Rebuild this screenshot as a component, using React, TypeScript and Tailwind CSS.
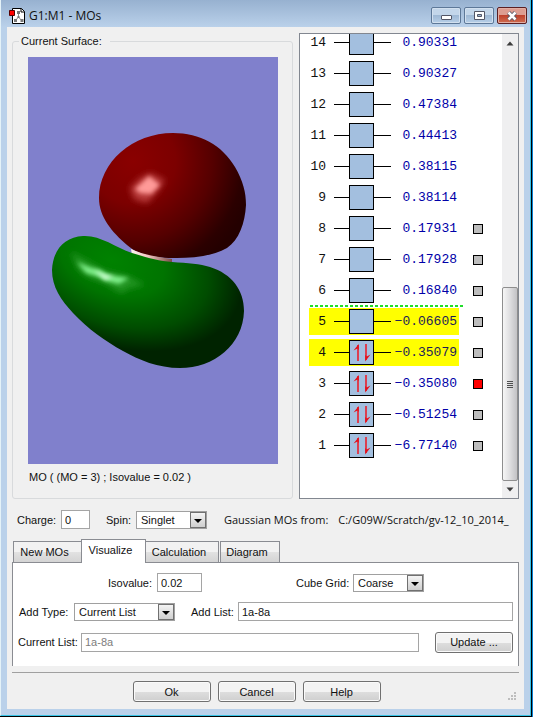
import type { ReactNode } from "react";

const ORBITALS = [
  { id: 14, energy: "0.90331" },
  { id: 13, energy: "0.90327" },
  { id: 12, energy: "0.47384" },
  { id: 11, energy: "0.44413" },
  { id: 10, energy: "0.38115" },
  { id: 9, energy: "0.38114" },
  { id: 8, energy: "0.17931", pickable: true },
  { id: 7, energy: "0.17928", pickable: true },
  { id: 6, energy: "0.16840", pickable: true },
  { id: 5, energy: "−0.06605", pickable: true, highlighted: true },
  { id: 4, energy: "−0.35079", pickable: true, highlighted: true, filled: true },
  { id: 3, energy: "−0.35080", pickable: true, filled: true, shown: true },
  { id: 2, energy: "−0.51254", pickable: true, filled: true },
  { id: 1, energy: "−6.77140", pickable: true, filled: true },
];

// first unoccupied orbital, the dotted line is drawn above it
const LUMO = 5;

const FIELD = "border border-[#a5a5a5] bg-white px-[3px] h-[19px] outline-none min-w-0";

function SpinPair() {
  return (
    <svg viewBox="0 0 23 23" className="h-full w-full" aria-hidden>
      <path d="M8 20V4" fill="none" stroke="#ea1f2b" strokeWidth="1.6" />
      <path d="M8.8 3v6L7.500 7.500L3.500 9.500z" fill="#e3101c" />
      <path d="M16 3v16" fill="none" stroke="#ea1f2b" strokeWidth="1.6" />
      <path d="M15.200 20.500v-6.500l1.500 1.500L20.500 13.500z" fill="#e3101c" />
    </svg>
  );
}

function OrbitalRow({ orbital }: { orbital: (typeof ORBITALS)[number] }) {
  return (
    <li className="relative flex h-[31px] items-center pl-[9px]">
      {orbital.id === LUMO && (
        <span className="absolute -top-px left-[10px] h-[2px] w-[153px] bg-[repeating-linear-gradient(to_right,#22dd2b_0_3px,transparent_3px_5px)]" />
      )}
      <div
        className={
          orbital.highlighted
            ? "flex h-[27px] w-[150px] items-center bg-[#ffff00]"
            : "flex h-[27px] w-[150px] items-center"
        }
      >
        <span className="w-[17px] text-right">{orbital.id}</span>
        <span className="ml-2 h-px w-[15px] bg-black" />
        <span className="h-[25px] w-[25px] border border-black bg-[#a3bfdf]">
          {orbital.filled && <SpinPair />}
        </span>
        <span className="h-px w-[17px] bg-black" />
        <span
          className={
            orbital.highlighted
              ? "w-[66px] text-right text-[#1c1c58]"
              : "w-[66px] text-right text-[#0000a8]"
          }
        >
          {orbital.energy}
        </span>
      </div>
      {orbital.pickable && (
        <input
          type="checkbox"
          defaultChecked={orbital.shown}
          aria-label={`Orbital ${orbital.id}`}
          className="ml-[14px] h-[10px] w-[10px] appearance-none border border-black bg-[#bdbdbd] checked:bg-[#ff0000]"
        />
      )}
    </li>
  );
}

function Scrollbar() {
  return (
    <div className="flex w-4 shrink-0 flex-col bg-[#efeff0]">
      <button aria-label="Scroll up" className="flex h-[18px] items-center justify-center">
        <svg viewBox="0 0 8 5" className="h-[5px] w-2">
          <path d="M0.500 4.500L4 0.500L7.500 4.500z" fill="#3c3c3c" />
        </svg>
      </button>
      <div className="flex-1" />
      <div className="flex h-[194px] flex-col items-center justify-center gap-px rounded-[2px] border border-[#8e8e8e] bg-linear-to-r from-[#f6f6f6] via-[#dedee0] to-[#c2c2c5]">
        <span className="h-px w-[6px] bg-[#4f4f4f]" />
        <span className="h-px w-[6px] bg-[#4f4f4f]" />
        <span className="h-px w-[6px] bg-[#4f4f4f]" />
        <span className="h-px w-[6px] bg-[#4f4f4f]" />
      </div>
      <button aria-label="Scroll down" className="flex h-[17px] items-center justify-center">
        <svg viewBox="0 0 8 5" className="h-[5px] w-2">
          <path d="M0.500 0.500h7L4 4.500z" fill="#3c3c3c" />
        </svg>
      </button>
    </div>
  );
}

function Surface() {
  return (
    <svg viewBox="0 0 250 407" className="block w-full bg-[#8080cc]" role="img" aria-label="Orbital surface">
      <defs>
        <radialGradient id="red" gradientUnits="userSpaceOnUse" cx="105" cy="104" r="122">
          <stop offset="0" stopColor="#8a0000" />
          <stop offset="0.35" stopColor="#7c0000" />
          <stop offset="0.65" stopColor="#550000" />
          <stop offset="0.9" stopColor="#2b0000" />
          <stop offset="1" stopColor="#240000" />
        </radialGradient>
        <radialGradient
          id="green"
          gradientUnits="userSpaceOnUse"
          cx="0"
          cy="0"
          r="1"
          gradientTransform="translate(84 203) rotate(20) scale(134 84)"
        >
          <stop offset="0" stopColor="#008200" />
          <stop offset="0.4" stopColor="#007400" />
          <stop offset="0.75" stopColor="#004c00" />
          <stop offset="1" stopColor="#002300" />
        </radialGradient>
        <linearGradient id="neck" x1="0" x2="1">
          <stop offset="0" stopColor="#fff4f0" />
          <stop offset="0.4" stopColor="#f3c8c4" />
          <stop offset="1" stopColor="#7a4a48" />
        </linearGradient>
        <filter id="soft" x="-50%" y="-50%" width="200%" height="200%">
          <feGaussianBlur stdDeviation="3" />
        </filter>
        <filter id="glint" x="-50%" y="-50%" width="200%" height="200%">
          <feGaussianBlur stdDeviation="2" />
        </filter>
      </defs>
      <path
        d="M145 76C172 76 194 88 207 110C215 124 218 135 218 148C217 166 211 183 199 191C185 199 165 201 149 201C132 201 112 200 99 188C84 175 71 160 71 141C71 105 105 76 145 76z"
        fill="url(#red)"
      />
      <path d="M103 192C113 197 128 200 144 202V207L104 198z" fill="url(#neck)" />
      <path d="M102 131L112 121L122 116L137 123L130 134L119 146L106 142z" fill="#b83a3a" filter="url(#soft)" />
      <path d="M107 132L121 119L132 128L123 137L112 136z" fill="#ff9a98" filter="url(#glint)" />
      <path
        d="M55 179C72 178 87 190 104 196C120 201 131 204 144 205C160 206 172 207 182 210C204 217 216 233 216 254C215 288 186 311 152 311C130 311 111 303 95 294C77 284 60 272 45 256C33 243 24 230 24 213C25 192 37 180 55 179z"
        fill="url(#green)"
      />
      <path d="M43 195L58 203L78 214L100 219L117 228L102 231L93 236L78 227L60 220L50 213z" fill="#239423" filter="url(#soft)" />
      <path d="M49 205L61 210L72 213L80 218L101 221L91 227L79 224L72 220L58 216z" fill="#7ff08a" filter="url(#glint)" />
      <path d="M66 213L78 218L86 219L77 223z" fill="#d8ffdc" filter="url(#glint)" />
    </svg>
  );
}

function Dropdown({ id, value, className }: { id: string; value: string; className: string }) {
  return (
    <div className={`relative h-[18px] border border-[#a0a0a0] bg-white ${className}`}>
      <select id={id} defaultValue={value} className="block h-4 w-full appearance-none pl-1 leading-4 outline-none">
        <option>{value}</option>
      </select>
      <span className="pointer-events-none absolute inset-y-0 right-0 flex w-4 items-center justify-center border border-[#707070] bg-linear-to-b from-[#f4f4f4] to-[#cfcfcf]">
        <svg viewBox="0 0 8 4" className="mt-[3px] h-1 w-2">
          <path d="M0 0h8L4 4z" fill="#000" />
        </svg>
      </span>
    </div>
  );
}

function PushButton({ children }: { children: ReactNode }) {
  return (
    <button className="flex h-[21px] w-[78px] shrink-0 items-center justify-center rounded-[3px] border border-[#707070] bg-linear-to-b from-[#f3f3f3] from-50% via-[#dedede] via-50% to-[#cfcfcf] shadow-[inset_0_0_0_1px_#fafafa]">
      {children}
    </button>
  );
}

function TitleBar() {
  return (
    <header className="flex h-[27px] items-center bg-linear-to-b from-[#97b1d0] to-[#bad1ea] pr-[3px] pl-2">
      <svg viewBox="0 0 16 16" className="mt-1 h-4 w-4" aria-hidden>
        <path d="M3.500 0.500h9l3 3v12h-12z" fill="#fff" stroke="#000" />
        <path d="M12 0.500v3.500h3.500" fill="none" stroke="#000" />
        <path d="M9.500 4v5M9.500 9L6 13M9.500 9L13 13" stroke="#8a8a8a" fill="none" />
        <path d="M8 3h3v3H8zM5 11h3v3H5zM11.500 11h3v3h-3zM8.500 8h2v2h-2z" fill="#777" />
        <path d="M0.500 2.500h5v5h-5z" fill="#f00" stroke="#500" />
      </svg>
      <h1 className="mt-1 ml-1 flex-1 font-['Open_Sans',sans-serif] text-[12px] leading-4 text-[#111]">G1:M1 - MOs</h1>
      <div className="mt-1 flex gap-[3px]">
        <button
          aria-label="Minimize"
          className="flex h-[17px] w-[30px] items-center justify-center rounded-[2px] border border-[#5d7898] bg-linear-to-b from-[#c3d6ea] from-50% via-[#9fb9d5] via-50% to-[#b7cfe8] shadow-[inset_0_0_0_1px_#d2e0ef]"
        >
          <span className="mt-1 h-[5px] w-[11px] rounded-[1px] border border-[#535666] bg-white" />
        </button>
        <button
          aria-label="Maximize"
          className="flex h-[17px] w-[30px] items-center justify-center rounded-[2px] border border-[#5d7898] bg-linear-to-b from-[#c3d6ea] from-50% via-[#9fb9d5] via-50% to-[#b7cfe8] shadow-[inset_0_0_0_1px_#d2e0ef]"
        >
          <svg viewBox="0 0 11 9" className="h-[9px] w-[11px]">
            <path d="M0.500 0.500h10v8h-10z" fill="#fff" stroke="#535666" />
            <path d="M3.500 3.500h4v2h-4z" fill="#9fb9d5" stroke="#535666" />
          </svg>
        </button>
        <button
          aria-label="Close"
          className="flex h-[17px] w-[30px] items-center justify-center rounded-[2px] border border-[#5b1f22] bg-linear-to-b from-[#dd9d91] from-50% via-[#bf412c] via-50% to-[#cf6c50] shadow-[inset_0_0_0_1px_#e3aea3]"
        >
          <svg viewBox="0 0 12 10" className="h-[10px] w-3">
            <path d="M2.500 1.500L9.500 8.500M9.500 1.500L2.500 8.500" stroke="#535666" strokeWidth="4.200" />
            <path d="M2.500 1.500L9.500 8.500M9.500 1.500L2.500 8.500" stroke="#fff" strokeWidth="2.600" />
          </svg>
        </button>
      </div>
    </header>
  );
}

function Tabs() {
  const idle =
    "h-[21px] border border-b-0 border-[#8a8c92] bg-linear-to-b from-[#f2f2f2] from-50% via-[#e2e2e2] via-50% to-[#d4d4d4]";
  return (
    <div role="tablist" className="relative z-10 -mb-px flex items-end pb-px">
      <button role="tab" className={`${idle} ml-px w-[68px] border-r-0 pr-[6px]`}>
        New MOs
      </button>
      <button
        role="tab"
        aria-selected
        className="-mb-px h-6 w-[65px] border border-b-0 border-[#8a8c92] bg-white pr-[6px] pb-[3px]"
      >
        Visualize
      </button>
      <button role="tab" className={`${idle} w-[73px] border-l-0 pr-[6px]`}>
        Calculation
      </button>
      <button role="tab" className={`${idle} ml-px w-[60px] pr-[6px]`}>
        Diagram
      </button>
    </div>
  );
}

export default function App() {
  return (
    <div className="border-r border-[#0a80d0]">
      <div className="border-r border-b border-black">
        <div className="flex min-h-[calc(100vh-1px)] flex-col border-r border-b border-l border-[#38c4e6] border-l-[#e4f2f8] bg-[#bad1ea] font-['Liberation_Sans',sans-serif] text-[11px] leading-4 text-[#111]">
          <TitleBar />
          <main className="mr-[6px] mb-[6px] ml-[6px] flex flex-1 flex-col bg-[#f0f0f0] px-[5px] pt-[6px]">
            <div className="flex gap-[6px]">
              <fieldset className="min-w-0 flex-1 rounded-[3px] border border-[#d8dadc] pr-[14px] pb-[13px] pl-[15px]">
                <legend className="-ml-[9px] px-[2px] pr-2">Current Surface:</legend>
                <div className="mt-2">
                  <Surface />
                </div>
                <p className="mt-[5px] pl-px">MO ( (MO = 3) ; Isovalue = 0.02 )</p>
              </fieldset>
              <div className="flex w-[220px] shrink-0 justify-between overflow-hidden border border-[#828790] bg-white">
                <ul className="-mt-[7px] flex flex-col pb-9 font-['Liberation_Mono',monospace] text-[13px]">
                  {ORBITALS.map((orbital) => (
                    <OrbitalRow key={orbital.id} orbital={orbital} />
                  ))}
                </ul>
                <Scrollbar />
              </div>
            </div>

            <div className="mt-[11px] flex items-center pl-[5px]">
              <label htmlFor="charge" className="w-11">Charge:</label>
              <input id="charge" defaultValue="0" className={`${FIELD} w-[29px]`} />
              <label htmlFor="spin" className="ml-4 w-[30px]">Spin:</label>
              <Dropdown id="spin" value="Singlet" className="w-[71px]" />
              <p className="ml-[17px] flex-1 font-['Open_Sans',sans-serif] whitespace-nowrap">
                Gaussian MOs from:<span className="ml-[10px]">C:/G09W/Scratch/gv-12_10_2014_</span>
              </p>
            </div>

            <div className="mt-[10px]">
              <Tabs />
              <div role="tabpanel" className="flex flex-col gap-[10px] border border-b-0 border-[#8a8c92] bg-white pt-[10px] pr-[5px] pb-[13px] pl-[5px]">
                <div className="flex h-[19px] items-center pl-[90px]">
                  <label htmlFor="isovalue" className="w-[49px]">Isovalue:</label>
                  <input id="isovalue" defaultValue="0.02" className={`${FIELD} w-[45px]`} />
                  <label htmlFor="grid" className="ml-[94px] w-[57px]">Cube Grid:</label>
                  <Dropdown id="grid" value="Coarse" className="w-[71px]" />
                </div>
                <div className="flex h-[19px] items-center">
                  <label htmlFor="add-type" className="w-14 pl-px">Add Type:</label>
                  <Dropdown id="add-type" value="Current List" className="w-[101px]" />
                  <label htmlFor="add-list" className="ml-4 w-[47px]">Add List:</label>
                  <input id="add-list" defaultValue="1a-8a" className={`${FIELD} flex-1`} />
                </div>
                <div className="flex h-[22px] items-center">
                  <label htmlFor="current-list" className="w-[63px]">Current List:</label>
                  <input id="current-list" readOnly value="1a-8a" className={`${FIELD} mr-4 flex-1 text-[#7d7d7d]`} />
                  <PushButton>Update ...</PushButton>
                </div>
              </div>
            </div>

            <div className="mt-[6px] border-t border-[#a0a0a0] shadow-[inset_0_1px_0_#fff]" />
            <footer className="relative flex justify-center gap-[7px] pt-2 pr-[18px] pb-[6px]">
              <PushButton>Ok</PushButton>
              <PushButton>Cancel</PushButton>
              <PushButton>Help</PushButton>
              <svg viewBox="0 0 8 8" className="absolute right-[3px] bottom-2 h-2 w-2" aria-hidden>
                <path d="M6 0h2v2H6zM6 3h2v2H6zM3 3h2v2H3zM6 6h2v2H6zM3 6h2v2H3zM0 6h2v2H0z" fill="#bdbdbd" />
              </svg>
            </footer>
          </main>
        </div>
      </div>
    </div>
  );
}
